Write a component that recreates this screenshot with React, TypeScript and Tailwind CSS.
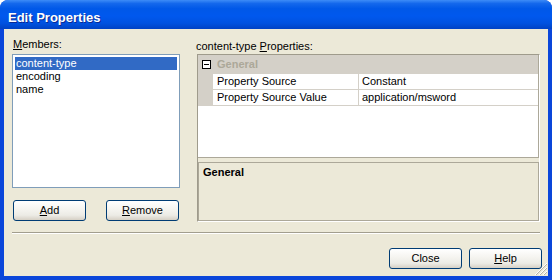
import React from "react";

const XpButton: React.FC<{ children: React.ReactNode }> = ({ children }) => (
  <div className="w-[73px] h-[21px] rounded-[3px] border border-[#003C74] bg-[linear-gradient(to_bottom,#FFFFFF_0%,#F6F5F1_40%,#ECEBE5_75%,#D6D0C5_100%)] flex items-center justify-center text-black text-[11px] leading-[13px]">
    {children}
  </div>
);

const Row: React.FC<{ name: string; value: string }> = ({ name, value }) => (
  <div className="flex h-[16px] border-b border-[#D4D0C8]">
    <div className="w-[15px] bg-[#D4D0C8]" />
    <div className="w-[146px] border-r border-[#D4D0C8] pl-[4px] leading-[15px] whitespace-nowrap">{name}</div>
    <div className="flex-1 pl-[3px] leading-[15px] whitespace-nowrap">{value}</div>
  </div>
);

export default function App() {
  return (
    <div
      className="w-[552px] h-[280px] flex flex-col rounded-t-[8px] overflow-hidden bg-[#0A46DA] text-[11px] text-black"
      style={{ fontFamily: '"Liberation Sans", Arial, sans-serif' }}
    >
      {/* Title bar */}
      <div className="h-[29px] shrink-0 bg-[linear-gradient(to_bottom,#3D8CF7_0%,#1468EC_12%,#0058E8_30%,#0058EE_55%,#0052E0_80%,#0042C4_100%)] pl-[8px] pt-[11px]">
        <div className="text-white font-bold text-[13px] leading-[13px] [text-shadow:1px_1px_0_#0A2A95]">
          Edit Properties
        </div>
      </div>

      {/* Client area */}
      <div className="flex-1 mx-[4px] mb-[4px] bg-[#ECE9D8] relative flex flex-col">
        <div className="flex pt-[8px] pl-[8px]">
          {/* Left column */}
          <div className="w-[168px] flex flex-col">
            <div className="mt-[1px] h-[13px] leading-[13px] pl-[1px]">
              <span className="underline underline-offset-[1px]">M</span>embers:
            </div>
            <div className="mt-[3px] h-[134px] border border-[#7F9DB9] bg-white p-[2px]">
              <div className="h-[13px] leading-[13px] bg-[#316AC5] text-white pl-[1px]">content-type</div>
              <div className="h-[13px] leading-[13px] pl-[1px]">encoding</div>
              <div className="h-[13px] leading-[13px] pl-[1px]">name</div>
            </div>
            <div className="mt-[12px] flex justify-between px-[1px]">
              <XpButton>
                <span className="underline underline-offset-[1px]">A</span>dd
              </XpButton>
              <XpButton>
                <span className="underline underline-offset-[1px]">R</span>emove
              </XpButton>
            </div>
          </div>

          {/* Right column */}
          <div className="ml-[17px] w-[343px] flex flex-col">
            <div className="mt-[3px] h-[13px] leading-[13px] -ml-[1px] whitespace-nowrap">
              content-type <span className="underline underline-offset-[1px]">P</span>roperties:
            </div>
            <div className="mt-[1px] h-[168px] border-t border-l border-[#9F9B8C] border-b-white border-r-white border-b border-r flex flex-col">
              {/* Grid view */}
              <div className="h-[103px] bg-white border-b border-r border-[#ACA899] flex flex-col">
                <div className="h-[19px] bg-[#D4D0C8] flex items-center">
                  <div className="w-[15px] flex justify-center pl-[1px]">
                    <div className="w-[9px] h-[9px] border border-black bg-white relative">
                      <div className="absolute left-[1px] top-[3px] w-[5px] h-[1px] bg-black" />
                    </div>
                  </div>
                  <div className="pl-[4px] font-bold text-[#ACA899] leading-[13px]">General</div>
                </div>
                <Row name="Property Source" value="Constant" />
                <Row name="Property Source Value" value="application/msword" />
              </div>
              {/* Description */}
              <div className="mt-[4px] h-[59px] border border-[#ACA899] pt-[3px] pl-[4px]">
                <div className="font-bold leading-[13px]">General</div>
              </div>
            </div>
          </div>
        </div>

        {/* Separator */}
        <div className="mt-[10px] ml-[8px] mr-[8px] h-[2px] border-t border-[#A29E8E] border-b border-b-white" />

        {/* Bottom buttons */}
        <div className="mt-[14px] flex justify-end gap-[7px] pr-[6px]">
          <XpButton>Close</XpButton>
          <XpButton>
            <span className="underline underline-offset-[1px]">H</span>elp
          </XpButton>
        </div>

        {/* Resize grip */}
        <svg className="absolute right-[1px] bottom-[1px]" width="12" height="12" viewBox="0 0 12 12">
          {[0, 4, 8].map((o) => (
            <g key={o}>
              <line x1={12 - (12 - o)} y1={12} x2={12} y2={o} stroke="#FFFFFF" strokeWidth="1" />
              <line x1={12 - (12 - o) + 1} y1={12} x2={12} y2={o + 1} stroke="#B6B3A6" strokeWidth="1" />
            </g>
          ))}
        </svg>
      </div>
    </div>
  );
}
